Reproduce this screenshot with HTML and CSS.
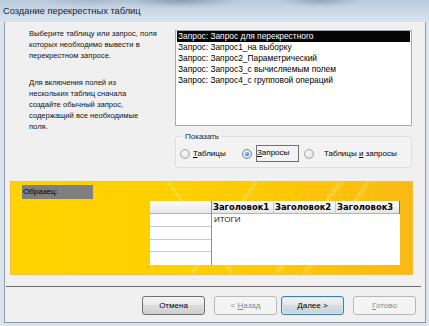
FILE: index.html
```html
<!DOCTYPE html>
<html lang="ru">

<head>
	<meta charset="utf-8">
	<title>Создание перекрестных таблиц</title>
	<link rel="stylesheet" href="styles.css">
</head>

<body>
	<div class="window">
		<div class="titlebar">Создание перекрестных таблиц</div>

		<div class="frame">
			<div class="inner">
				<div class="top">
					<div class="hint">
						<p>Выберите таблицу или запрос, поля<br>которых необходимо вывести в<br>перекрестном запросе.</p>
						<p>Для включения полей из<br>нескольких таблиц сначала<br>создайте обычный запрос,<br>содержащий все необходимые<br>поля.</p>
					</div>

					<div class="pick">
						<ul class="list">
							<li class="sel">Запрос: Запрос для перекрестного</li>
							<li>Запрос: Запрос1_на выборку</li>
							<li>Запрос: Запрос2_Параметрический</li>
							<li>Запрос: Запрос3_с вычисляемым полем</li>
							<li>Запрос: Запрос4_с групповой операций</li>
						</ul>

						<fieldset class="show">
							<legend>Показать</legend>
							<div class="radios">
								<label class="radio"><span class="dot"></span><span><u>Т</u>аблицы</span></label>
								<label class="radio checked"><span class="dot"></span><span class="focus"><u>З</u>апросы</span></label>
								<label class="radio wide"><span class="dot"></span><span>Таблицы <u>и</u> запросы</span></label>
							</div>
						</fieldset>
					</div>
				</div>

				<!-- образец перекрестной таблицы -->
				<div class="sample">
					<div class="sample-label">Образец:</div>
					<div class="grid">
						<div class="rowheads">
							<div class="head"></div>
							<div class="cell"></div>
							<div class="cell"></div>
							<div class="cell"></div>
							<div class="cell"></div>
						</div>
						<div class="values">
							<div class="heads">
								<div class="head">Заголовок1</div>
								<div class="head">Заголовок2</div>
								<div class="head">Заголовок3</div>
							</div>
							<div class="body">ИТОГИ</div>
						</div>
					</div>
				</div>

				<div class="sep"></div>

				<div class="buttons">
					<button class="btn">Отмена</button>
					<button class="btn off">&lt; <u>Н</u>азад</button>
					<button class="btn main"><u>Д</u>алее &gt;</button>
					<button class="btn off"><u>Г</u>отово</button>
				</div>
			</div>
		</div>
	</div>
</body>

</html>
```

FILE: styles.css
```css
* {
	box-sizing: border-box;
}

body {
	margin: 0;
	padding: 0;
	background: #f0f0f0;
	font-family: "Liberation Sans", Arial, sans-serif;
	font-size: 8px;
	color: #000;
}

.window {
	width: 429px;
	height: 326px;
	overflow: hidden;
}

.titlebar {
	height: 22px;
	line-height: 22px;
	padding-left: 3px;
	font-size: 9.3px;
	color: #1b2633;
	background:
		radial-gradient(ellipse 60px 8px at 180px 0, rgba(80, 100, 125, .45), transparent),
		radial-gradient(ellipse 40px 6px at 320px 1px, rgba(80, 100, 125, .35), transparent),
		radial-gradient(ellipse 50px 7px at 90px 0, rgba(120, 140, 160, .3), transparent),
		linear-gradient(#b9cadc, #cbd9e8 55%, #d6e3f0);
}

.frame {
	height: 304px;
	border: solid #dbe3ec;
	border-width: 0 3px 3px 4px;
}

.inner {
	height: 100%;
	border: 1px solid #8d99a6;
	border-top: none;
	background: #f0f0f0;
}

.top {
	display: flex;
	padding-top: 8px;
}

.hint {
	width: 170px;
	padding-left: 24px;
	margin-top: -2px;
	font-size: 7.6px;
	line-height: 11px;
	white-space: nowrap;
	color: #111;
}

.hint p {
	margin: 0;
}

.hint p + p {
	margin-top: 16px;
}

.pick {
	width: 237px;
}

.list {
	height: 96px;
	margin: 0;
	padding: 0 1px;
	list-style: none;
	background: #fff;
	border: 1px solid #a7abb0;
	font-size: 8.4px;
}

.list li {
	height: 11px;
	line-height: 11px;
	padding-left: 1px;
	white-space: nowrap;
}

.list .sel {
	background: #050505;
	color: #fff;
}

.show {
	margin: 5px 0 0;
	height: 37px;
	padding: 3px 0 0 4px;
	border: 1px solid #dcdfe2;
	border-radius: 3px;
	background: #f3f3f3;
}

.show legend {
	margin-left: 3px;
	padding: 0 2px;
	line-height: 11px;
	color: #222;
}

.radios {
	display: flex;
	align-items: center;
	height: 17px;
}

.radio {
	width: 62px;
	flex-shrink: 0;
	display: flex;
	align-items: center;
	gap: 3px;
	white-space: nowrap;
}

.radio.wide {
	width: auto;
	gap: 10px;
}

.dot {
	flex-shrink: 0;
	width: 10px;
	height: 10px;
	border-radius: 50%;
	border: 1px solid #a3a6a9;
	background: radial-gradient(circle at 40% 35%, #fafafa, #d8d8d8);
	display: flex;
	align-items: center;
	justify-content: center;
}

.checked .dot {
	border-color: #5b89b3;
}

.checked .dot::after {
	content: "";
	width: 4px;
	height: 4px;
	border-radius: 50%;
	background: radial-gradient(circle at 40% 35%, #8cc0ec, #1f5f9e);
}

.focus {
	border: 1px solid #707070;
	height: 17px;
	width: 43px;
	line-height: 11px;
	padding-top: 1px;
	margin-left: 1px;
}

.sample {
	height: 94px;
	margin: 13px 12px 0 5px;
	padding: 3px 11px 0;
	border: 1px solid #f3bf3e;
	background:
		linear-gradient(125deg, transparent 70%, rgba(255, 235, 150, .35) 70.5%, transparent 72%, transparent 76%, rgba(255, 235, 150, .3) 76.5%, transparent 78%),
		linear-gradient(55deg, transparent 47%, rgba(255, 240, 160, .35) 47.5%, transparent 48.5%),
		linear-gradient(125deg, transparent 52%, rgba(255, 240, 160, .35) 52.5%, transparent 53.5%),
		linear-gradient(90deg, #ffd300, #ffcf00 45%, #fdc40a 75%, #f8b915);
}

.sample-label {
	width: 71px;
	height: 14px;
	line-height: 14px;
	padding-left: 1px;
	background: #7f7f7f;
	color: #000;
}

.grid {
	display: flex;
	width: 250px;
	height: 64px;
	margin: 2px 0 0 128px;
	background: #fff;
}

.rowheads {
	width: 62px;
	border-right: 1px solid #8f8f8f;
}

.head {
	height: 13px;
	line-height: 12px;
	background: linear-gradient(#fbfbfb, #e6e6e6);
	border-bottom: 1px solid #b4b4b4;
	border-right: 1px solid #c9c9c9;
}

.rowheads .head {
	border-right: none;
}

.cell {
	height: 12.75px;
	border-bottom: 1px solid #c7c7c7;
}

.cell:last-child {
	border-bottom: none;
}

.values {
	flex: 1;
	display: flex;
	flex-direction: column;
}

.heads {
	display: flex;
	border-right: 1px solid #6f6f6f;
}

.heads .head {
	width: 62px;
	padding-left: 1px;
	font-family: "DejaVu Sans", sans-serif;
	font-weight: bold;
	font-size: 8.4px;
	white-space: nowrap;
}

.heads .head:last-child {
	flex: 1;
	border-right: none;
}

.values .body {
	flex: 1;
	padding: 1px 0 0 2px;
	line-height: 10px;
	color: #222;
}

.sep {
	height: 1px;
	margin: 11px 4px 0 1px;
	background: #6a6a6a;
}

.buttons {
	display: flex;
	justify-content: flex-end;
	gap: 9px;
	margin: 9px 9px 0 0;
}

.btn {
	width: 63px;
	height: 19px;
	padding: 0;
	font-family: "Liberation Sans", Arial, sans-serif;
	font-size: 8px;
	color: #000;
	border: 1px solid #707070;
	border-radius: 3px;
	background: linear-gradient(#f3f3f3, #ebebeb 45%, #dddddd 50%, #cfcfcf);
}

.btn.off {
	color: #8a8a8a;
	border-color: #b5b8bb;
	background: #f4f4f4;
}

.btn.main {
	margin-left: -5px;
	border-color: #3c7fb1;
	box-shadow: inset 0 0 0 1px #cde9f8;
	background: linear-gradient(#eef2f4, #e3e8eb 45%, #d6dde2 50%, #c9d1d7);
}
```
